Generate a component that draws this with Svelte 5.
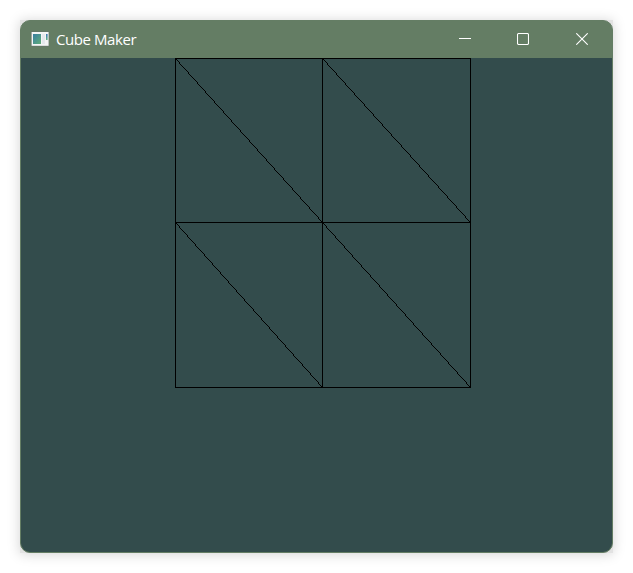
<script>
  const cols = [0, 147, 295];
  const rows = [0, 164, 329];
  const cells = [0, 1].flatMap((r) => [0, 1].map((c) => ({ r, c })));

  // Rasterises a cell's diagonal as one solid pixel per scanline.
  function diagonal(r, c) {
    const w = cols[c + 1] - cols[c];
    const h = rows[r + 1] - rows[r];
    let d = '';
    for (let i = 0; i <= h; i++) {
      d += `M${cols[c] + Math.round((i * w) / h)} ${rows[r] + i}h1v1h-1z`;
    }
    return d;
  }
</script>

<main>
  <div class="frame">
    <section class="window">
      <header>
        <svg class="app-icon" width="18" height="16" viewBox="0 0 18 16" aria-hidden="true">
          <defs>
            <linearGradient id="tile" x1="0" y1="0" x2="1" y2="1">
              <stop offset="0" stop-color="#397fa3" />
              <stop offset="1" stop-color="#61ad79" />
            </linearGradient>
            <linearGradient id="strip" x1="0" y1="0" x2="0" y2="1">
              <stop offset="0" stop-color="#3c73b8" />
              <stop offset="1" stop-color="#62b384" />
            </linearGradient>
          </defs>
          <rect x="0" y="0.5" width="18" height="15" fill="#66746b" />
          <rect x="0.6" y="1" width="17" height="13.8" fill="#f4f5f6" />
          <rect x="2" y="3" width="8" height="10" fill="url(#tile)" />
          <rect x="11" y="3" width="3" height="10" fill="#e5e8ed" />
          <rect x="15" y="3" width="1.6" height="6" fill="url(#strip)" />
        </svg>
        <h1>Cube Maker</h1>
        <nav>
          <button aria-label="Minimize">
            <svg width="12" height="12" viewBox="0 0 12 12"><path d="M0 5.5H12" /></svg>
          </button>
          <button aria-label="Maximize">
            <svg width="12" height="12" viewBox="0 0 12 12"><rect x="0.5" y="0.5" width="11" height="11" rx="1.2" /></svg>
          </button>
          <button aria-label="Close">
            <svg width="12" height="12" viewBox="0 0 12 12"><path d="M0.3 0.3L11.7 11.7M11.7 0.3L0.3 11.7" /></svg>
          </button>
        </nav>
      </header>
      <div class="viewport">
        <svg class="mesh" width="296" height="330" viewBox="0 0 296 330" shape-rendering="crispEdges">
          {#each cols as x}
            <path d="M{x + 0.5} 0V330" />
          {/each}
          {#each rows as y}
            <path d="M0 {y + 0.5}H296" />
          {/each}
          {#each cells as { r, c }}
            <path class="diagonal" d={diagonal(r, c)} />
          {/each}
        </svg>
      </div>
    </section>
  </div>
</main>

<style>
  :global(body) {
    background: #fff;
  }
  main {
    box-sizing: border-box;
    width: 633px;
    height: 573px;
    padding: 20px;
    overflow: hidden;
  }
  .frame {
    width: 593px;
    height: 533px;
    background: #e2e2e2;
    box-shadow: 0 1px 12px rgba(0, 0, 0, 0.18);
  }
  .window {
    box-sizing: border-box;
    display: flex;
    flex-direction: column;
    height: 100%;
    border: 1px solid #647d64;
    border-radius: 10px;
    background: #647d64;
    overflow: hidden;
  }
  header {
    box-sizing: border-box;
    display: flex;
    align-items: center;
    flex: 0 0 37px;
    padding: 0 0 2px 10px;
    color: #fff;
  }
  .app-icon {
    margin-right: 7px;
  }
  h1 {
    flex: 1;
    margin: 0;
    font: 400 15px/20px "Open Sans", "Noto Sans", sans-serif;
    letter-spacing: -0.42px;
  }
  nav {
    display: flex;
    height: 100%;
    margin-right: 1px;
  }
  button {
    display: flex;
    align-items: center;
    justify-content: center;
    width: 58.5px;
    padding: 0;
    border: 0;
    background: none;
  }
  button svg {
    fill: none;
    stroke: #fff;
    stroke-width: 1.1;
  }
  .viewport {
    flex: 1;
    padding-left: 154px;
    background: #334c4c;
  }
  .mesh {
    display: block;
    fill: none;
    stroke: #000;
  }
  .diagonal {
    fill: #000;
    stroke: none;
  }
</style>
